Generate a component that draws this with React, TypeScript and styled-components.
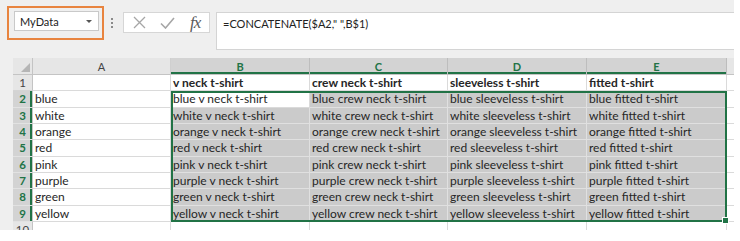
import styled, { createGlobalStyle } from "styled-components";

const GlobalStyle = createGlobalStyle`
  body {
    margin: 0;
    background: #ffffff;
    font-family: Lato, "Open Sans", sans-serif;
  }
`;

const Frame = styled.div`
  width: 734px;
  height: 230px;
  background: #efefef;
  overflow: hidden;
`;

const TopBar = styled.div`
  height: 58px;
  display: flex;
  align-items: flex-start;
`;

const NameHighlight = styled.div`
  margin: 6px 0 0 7px;
  width: 97px;
  height: 34px;
  box-sizing: border-box;
  border: 2px solid #e8843f;
  padding: 3px 3px 3px 5px;
  display: flex;
`;

const NameBox = styled.div`
  flex: 1;
  height: 20px;
  box-sizing: border-box;
  background: #ffffff;
  border: 1px solid #c9c9c9;
  display: flex;
  align-items: center;
  justify-content: space-between;
  padding: 0 6px 0 5px;
  font-size: 11px;
  color: #222;
`;

const Caret = styled.span`
  width: 0;
  height: 0;
  border-left: 3px solid transparent;
  border-right: 3px solid transparent;
  border-top: 3px solid #555;
`;

const Dots = styled.div`
  margin: 18px 0 0 7px;
  display: flex;
  flex-direction: column;
  gap: 2px;
  span {
    width: 2px;
    height: 2px;
    background: #8a8a8a;
  }
`;

const ButtonGroup = styled.div`
  margin: 12px 0 0 10px;
  width: 87px;
  height: 21px;
  box-sizing: border-box;
  background: #ffffff;
  border: 1px solid #d6d6d6;
  display: flex;
  padding-left: 2px;
`;

const BarButton = styled.div`
  width: 28px;
  display: flex;
  align-items: center;
  justify-content: center;
  color: #a6a6a6;
`;

const Fx = styled.span`
  font-family: "Liberation Serif", serif;
  font-style: italic;
  font-size: 17px;
  color: #5a5a5a;
  letter-spacing: -1px;
`;

const FormulaInput = styled.div`
  flex: 1;
  margin: 12px 0 0 6px;
  height: 38px;
  box-sizing: border-box;
  background: #ffffff;
  border: 1px solid #d4d4d4;
  border-right: none;
  padding: 3px 6px;
  font-size: 11px;
  line-height: 15px;
  color: #222;
  white-space: pre;
`;

const Sheet = styled.div`
  margin-left: 13px;
  position: relative;
  display: grid;
  grid-template-columns: 20px 138px 139px 138px 139px 140px 40px;
  grid-template-rows: 17px repeat(10, 16.33px);
  font-size: 12px;
`;

const Corner = styled.div`
  background: #e6e6e6;
  border-right: 1px solid #c4c4c4;
  border-bottom: 1px solid #c4c4c4;
  display: flex;
  align-items: flex-end;
  justify-content: flex-end;
  padding: 0 2px 2px 0;
`;

const ColHeader = styled.div<{ $selected?: boolean }>`
  background: ${(p) => (p.$selected ? "#d3d3d3" : "#e6e6e6")};
  color: ${(p) => (p.$selected ? "#217346" : "#444")};
  font-weight: ${(p) => (p.$selected ? 700 : 400)};
  font-size: 11px;
  border-right: 1px solid ${(p) => (p.$selected ? "#bdbdbd" : "#cfcfcf")};
  border-bottom: 1px solid #c4c4c4;
  box-shadow: ${(p) => (p.$selected ? "inset 0 -2px 0 #217346" : "none")};
  display: flex;
  align-items: center;
  justify-content: center;
`;

const RowHeader = styled.div<{ $selected?: boolean }>`
  background: ${(p) => (p.$selected ? "#d3d3d3" : "#e6e6e6")};
  color: ${(p) => (p.$selected ? "#217346" : "#444")};
  font-weight: ${(p) => (p.$selected ? 700 : 400)};
  font-size: 11.5px;
  border-right: 1px solid #c4c4c4;
  border-bottom: 1px solid ${(p) => (p.$selected ? "#e2e2e2" : "#d4d4d4")};
  box-shadow: ${(p) => (p.$selected ? "inset -2px 0 0 #217346" : "none")};
  display: flex;
  align-items: center;
  justify-content: center;
`;

const Cell = styled.div<{ $selected?: boolean; $bold?: boolean }>`
  background: ${(p) => (p.$selected ? "#cbcbcb" : "#ffffff")};
  border-right: 1px solid ${(p) => (p.$selected ? "#e0e0e0" : "#dadada")};
  border-bottom: 1px solid ${(p) => (p.$selected ? "#e0e0e0" : "#dadada")};
  color: #262626;
  font-weight: ${(p) => (p.$bold ? 700 : 400)};
  padding-left: 2px;
  line-height: 15px;
  white-space: nowrap;
  overflow: hidden;
`;

const Selection = styled.div`
  position: absolute;
  left: 158px;
  top: 33.33px;
  width: 556px;
  height: 130.7px;
  box-sizing: border-box;
  border: 2px solid #217346;
  pointer-events: none;
`;

const FillHandle = styled.div`
  position: absolute;
  right: -4px;
  bottom: -4px;
  width: 5px;
  height: 5px;
  background: #217346;
  border: 1px solid #ffffff;
`;

const colors = ["blue", "white", "orange", "red", "pink", "purple", "green", "yellow"];
const styles = ["v neck t-shirt", "crew neck t-shirt", "sleeveless t-shirt", "fitted t-shirt"];
const letters = ["A", "B", "C", "D", "E", ""];

export default function App() {
  return (
    <>
      <GlobalStyle />
      <Frame>
        <TopBar>
          <NameHighlight>
            <NameBox>
              MyData
              <Caret />
            </NameBox>
          </NameHighlight>
          <Dots>
            <span />
            <span />
            <span />
          </Dots>
          <ButtonGroup>
            <BarButton>
              <svg width="13" height="13" viewBox="0 0 13 13">
                <path d="M1 1 L12 12 M12 1 L1 12" stroke="currentColor" strokeWidth="1.3" fill="none" />
              </svg>
            </BarButton>
            <BarButton>
              <svg width="15" height="12" viewBox="0 0 15 12">
                <path d="M1 6.5 L5.5 11 L14 1" stroke="currentColor" strokeWidth="1.6" fill="none" />
              </svg>
            </BarButton>
            <BarButton>
              <Fx>fx</Fx>
            </BarButton>
          </ButtonGroup>
          <FormulaInput>=CONCATENATE($A2," ",B$1)</FormulaInput>
        </TopBar>
        <Sheet>
          <Corner>
            <svg width="9" height="9" viewBox="0 0 9 9">
              <polygon points="9,0 9,9 0,9" fill="#b5b5b5" />
            </svg>
          </Corner>
          {letters.map((l, i) => (
            <ColHeader key={i} $selected={i >= 1 && i <= 4}>
              {l}
            </ColHeader>
          ))}

          <RowHeader>1</RowHeader>
          <Cell />
          {styles.map((s) => (
            <Cell key={s} $bold>
              {s}
            </Cell>
          ))}
          <Cell />

          {colors.map((c, r) => (
            <>
              <RowHeader key={`h${c}`} $selected>
                {r + 2}
              </RowHeader>
              <Cell key={`a${c}`}>{c}</Cell>
              {styles.map((s, i) => (
                <Cell key={`${c}${s}`} $selected={!(r === 0 && i === 0)}>
                  {c} {s}
                </Cell>
              ))}
              <Cell key={`f${c}`} />
            </>
          ))}

          <RowHeader>10</RowHeader>
          <Cell />
          <Cell />
          <Cell />
          <Cell />
          <Cell />
          <Cell />

          <Selection>
            <FillHandle />
          </Selection>
        </Sheet>
      </Frame>
    </>
  );
}
